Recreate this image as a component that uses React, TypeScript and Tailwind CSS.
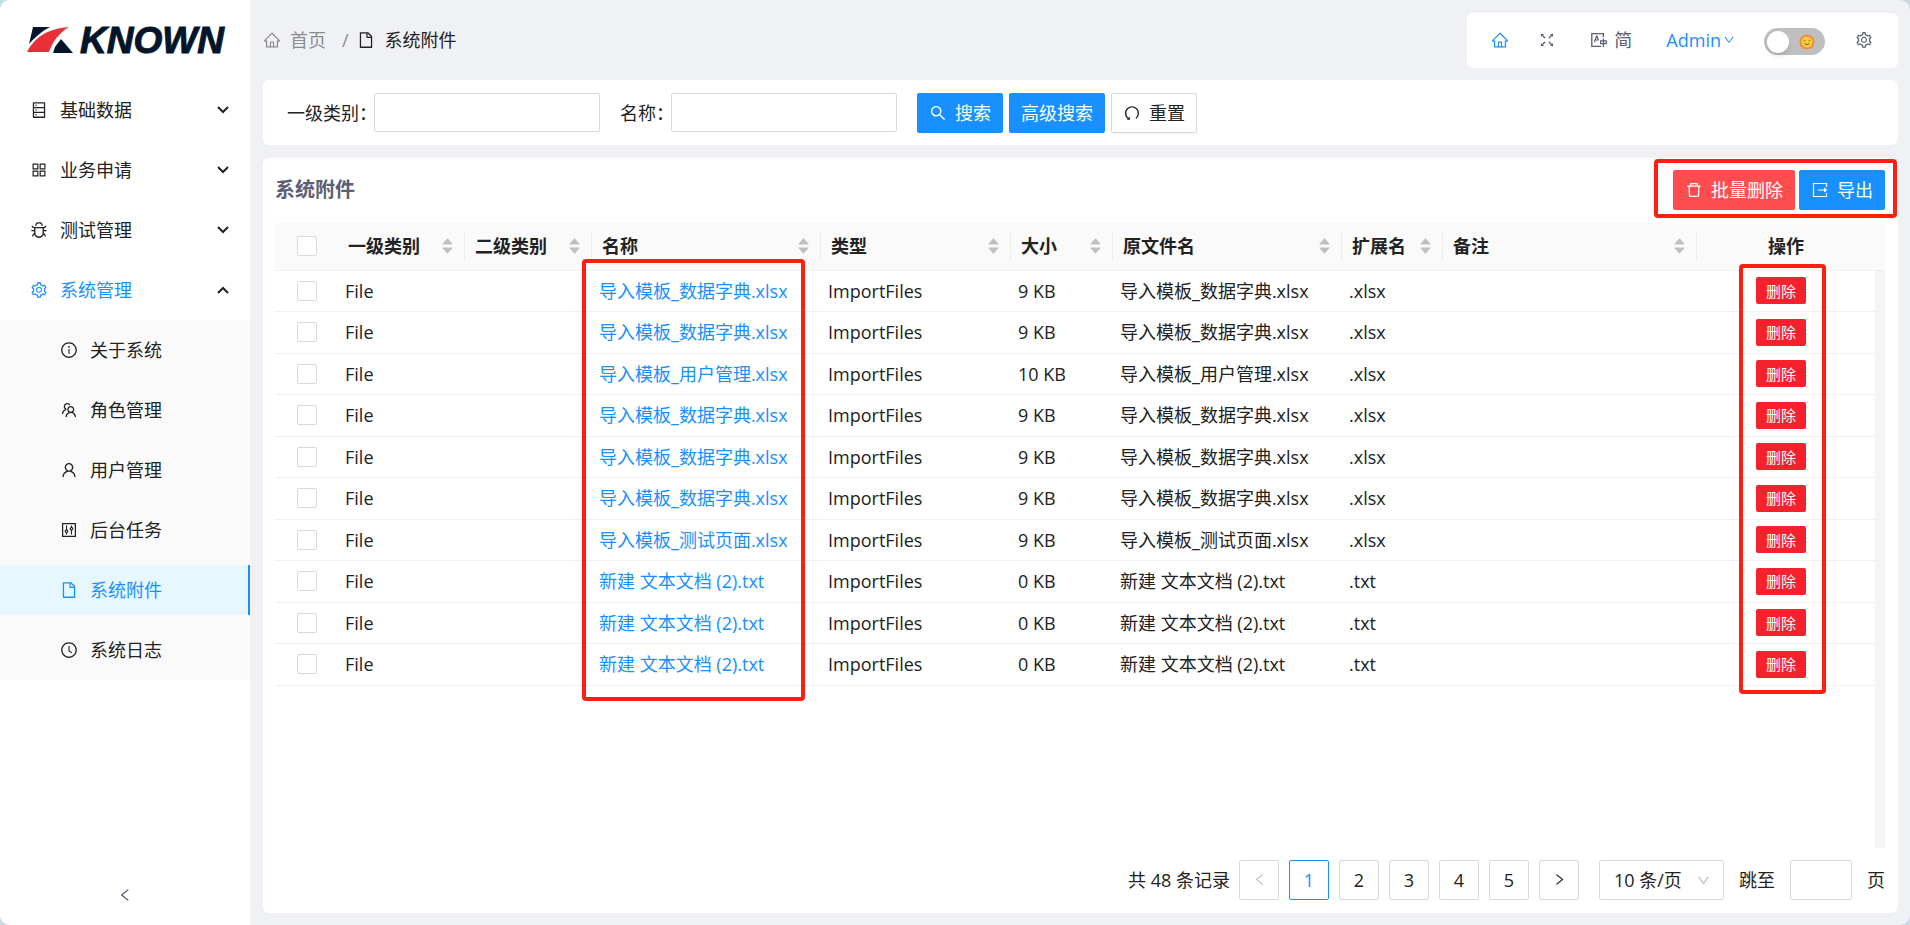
import { useState } from "react";
import type { ReactNode } from "react";
import type { IconType } from "react-icons";
import {
  AiFillCaretDown,
  AiFillCaretUp,
  AiOutlineAppstore,
  AiOutlineBug,
  AiOutlineClockCircle,
  AiOutlineControl,
  AiOutlineDatabase,
  AiOutlineDelete,
  AiOutlineDown,
  AiOutlineFile,
  AiOutlineFullscreen,
  AiOutlineHome,
  AiOutlineInfoCircle,
  AiOutlineLeft,
  AiOutlineRight,
  AiOutlineSearch,
  AiOutlineSetting,
  AiOutlineTeam,
  AiOutlineTranslation,
  AiOutlineUndo,
  AiOutlineUser,
} from "react-icons/ai";

const menus: { icon: IconType; label: string }[] = [
  { icon: AiOutlineDatabase, label: "基础数据" },
  { icon: AiOutlineAppstore, label: "业务申请" },
  { icon: AiOutlineBug, label: "测试管理" },
  { icon: AiOutlineSetting, label: "系统管理" },
];

const subMenus: { icon: IconType; label: string }[] = [
  { icon: AiOutlineInfoCircle, label: "关于系统" },
  { icon: AiOutlineTeam, label: "角色管理" },
  { icon: AiOutlineUser, label: "用户管理" },
  { icon: AiOutlineControl, label: "后台任务" },
  { icon: AiOutlineFile, label: "系统附件" },
  { icon: AiOutlineClockCircle, label: "系统日志" },
];

const columns = [
  { title: "一级类别", width: "w-[127px]" },
  { title: "二级类别", width: "w-[127px]" },
  { title: "名称", width: "w-[229px]" },
  { title: "类型", width: "w-[190px]" },
  { title: "大小", width: "w-[102px]" },
  { title: "原文件名", width: "w-[229px]" },
  { title: "扩展名", width: "w-[101px]" },
  { title: "备注", width: "" },
];

const dict = { name: "导入模板_数据字典.xlsx", size: "9 KB", ext: ".xlsx" };
const text = { name: "新建 文本文档 (2).txt", size: "0 KB", ext: ".txt" };

const files = [
  dict,
  dict,
  { name: "导入模板_用户管理.xlsx", size: "10 KB", ext: ".xlsx" },
  dict,
  dict,
  dict,
  { name: "导入模板_测试页面.xlsx", size: "9 KB", ext: ".xlsx" },
  text,
  text,
  text,
];

function Logo() {
  return (
    <div className="flex h-20 items-center pl-[27px]">
      <svg width="210" height="40" viewBox="0 0 210 40" aria-label="KNOWN">
        <path d="M6 7h17C15 11 8 17 2 24z" fill="#04152b" />
        <path d="M0 32C7 19 18 9 42 7C32 13 26 21 22 32z" fill="#e93038" />
        <path d="M34 19L46 33H26L28 27z" fill="#04152b" />
        <text
          x="53"
          y="33"
          className="font-['Liberation_Sans',sans-serif] text-[37px] font-bold italic"
          fill="#04152b"
          stroke="#04152b"
        >
          KNOWN
        </text>
      </svg>
    </div>
  );
}

function Chevron({ open }: { open: boolean }) {
  return (
    <svg width="12" height="8" viewBox="0 0 12 8" fill="none" stroke="#222" strokeWidth="2">
      <path d={open ? "M1 7l5-5 5 5" : "M1 1l5 5 5-5"} />
    </svg>
  );
}

function Sidebar() {
  return (
    <aside className="flex w-[250px] shrink-0 flex-col bg-white">
      <Logo />
      <nav>
        <div className="flex flex-col gap-[10px] py-[5px]">
          {menus.map(({ icon: Icon, label }) => {
            const open = label === "系统管理";
            return (
              <a
                key={label}
                href="#"
                className={`flex h-[50px] items-center pr-[21px] pl-[30px] ${open ? "text-[#1890ff]" : ""}`}
              >
                <Icon className="size-[18px]" />
                <span className="ml-3 flex-1">{label}</span>
                <Chevron open={open} />
              </a>
            );
          })}
        </div>
        <div className="flex flex-col gap-[10px] bg-[#fafafa] py-[5px]">
          {subMenus.map(({ icon: Icon, label }) => (
            <a
              key={label}
              href="#"
              className={`flex h-[50px] items-center border-r-2 pl-[60px] ${
                label === "系统附件" ? "border-[#1890ff] bg-[#e6f7ff] text-[#1890ff]" : "border-transparent"
              }`}
            >
              <Icon className="size-[18px]" />
              <span className="ml-3">{label}</span>
            </a>
          ))}
        </div>
      </nav>
      <button type="button" aria-label="收起" className="mt-auto flex h-[60px] items-center justify-center text-[#5b6074]">
        <AiOutlineLeft className="size-4" />
      </button>
    </aside>
  );
}

function Sun() {
  return (
    <svg width="16" height="16" viewBox="0 0 16 16" fill="none">
      <path
        d="M8 0l1.8 1.6L12 1l.9 2.1L15 4l-.4 2.2L16 8l-1.4 1.8L15 12l-2.1.9L12 15l-2.2-.5L8 16l-1.8-1.5L4 15l-.9-2.1L1 12l.4-2.2L0 8l1.4-1.8L1 4l2.1-.9L4 1l2.2.6z"
        fill="#f6873a"
      />
      <circle cx="8" cy="8" r="5.6" fill="#ffcf3f" />
      <path d="M4.5 7q1-1.4 2 0M9.5 7q1-1.4 2 0M5.5 9.5q2.5 2.5 5 0" stroke="#8a5a1c" />
    </svg>
  );
}

function ExportIcon() {
  return (
    <svg width="18" height="18" viewBox="0 0 18 18" fill="none" stroke="currentColor" className="mr-2">
      <path d="M15.5 6V2.5h-13v13h13V12" strokeWidth="1.2" />
      <path d="M7 9h7" strokeWidth="1.2" />
      <path d="M13 6.5L16.5 9 13 11.5z" fill="currentColor" stroke="none" />
    </svg>
  );
}

function TopBar() {
  const [dark, setDark] = useState(false);
  return (
    <header className="flex h-20 items-center justify-between">
      <div className="flex items-center text-[#222]">
        <a href="#" className="flex items-center text-[#8c8c8f]">
          <AiOutlineHome className="size-[18px]" />
          <span className="ml-[9px]">首页</span>
        </a>
        <span className="mr-2 ml-4 text-[#8c8c8f]">/</span>
        <AiOutlineFile className="size-[18px]" />
        <span className="ml-[10px]">系统附件</span>
      </div>
      <div className="flex h-[55px] items-center rounded-md bg-white pr-[25px] pl-6 text-[#5b6074]">
        <button type="button" aria-label="首页" className="text-[#1890ff]">
          <AiOutlineHome className="size-[18px]" />
        </button>
        <button type="button" aria-label="全屏" className="ml-[29px]">
          <AiOutlineFullscreen className="size-[18px]" />
        </button>
        <button type="button" className="ml-[34px] flex items-center">
          <AiOutlineTranslation className="size-[18px]" />
          <span className="ml-1.5">简</span>
        </button>
        <button type="button" className="ml-[34px] flex items-center text-[#1890ff]">
          Admin
          <AiOutlineDown className="ml-0.5 size-3" />
        </button>
        <label className="relative mt-[3px] ml-[29px] flex h-[27px] w-[61px] items-center rounded-full bg-[#bfbfbf]">
          <input
            type="checkbox"
            role="switch"
            aria-label="主题"
            checked={dark}
            onChange={(e) => setDark(e.target.checked)}
            className="absolute inset-0 size-full opacity-0"
          />
          <span className="ml-[3px] size-[22px] rounded-full bg-white shadow-md" />
          <span className="ml-[10px]">
            <Sun />
          </span>
        </label>
        <button type="button" aria-label="设置" className="ml-[30px]">
          <AiOutlineSetting className="size-[18px]" />
        </button>
      </div>
    </header>
  );
}

function Button({ className, children }: { className: string; children: ReactNode }) {
  return (
    <button type="button" className={`flex h-10 items-center rounded-xs border px-[11px] shadow-xs ${className}`}>
      {children}
    </button>
  );
}

function SearchForm() {
  return (
    <form className="flex h-[65px] items-center rounded-md bg-white pl-6">
      <label className="flex items-center whitespace-nowrap">
        <span className="w-[87px]">一级类别：</span>
        <input type="text" className="h-[39px] w-[226px] rounded-xs border border-[#d9d9d9] px-3" />
      </label>
      <label className="ml-5 flex items-center whitespace-nowrap">
        <span className="w-[51px]">名称：</span>
        <input type="text" className="h-[39px] w-[226px] rounded-xs border border-[#d9d9d9] px-3" />
      </label>
      <div className="ml-5 flex gap-1.5">
        <Button className="border-[#1890ff] bg-[#1890ff] text-white">
          <AiOutlineSearch className="mr-2 size-[18px]" />
          搜索
        </Button>
        <Button className="border-[#1890ff] bg-[#1890ff] text-white">高级搜索</Button>
        <Button className="border-[#d9d9d9]">
          <AiOutlineUndo className="mr-2 size-[18px]" />
          重置
        </Button>
      </div>
    </form>
  );
}

function Checkbox({ label }: { label: string }) {
  return (
    <input
      type="checkbox"
      aria-label={label}
      className="mx-auto block size-5 appearance-none rounded-xs border border-[#d9d9d9] bg-white checked:bg-[#1890ff]"
    />
  );
}

function FileTable() {
  return (
    <div className="relative flex flex-1">
      <table className="w-full table-fixed self-start">
        <thead>
          <tr className="h-[47px] border-b border-[#f0f0f0] bg-[#fafafa] text-left">
            <th className="w-[63px] p-0">
              <Checkbox label="全选" />
            </th>
            {columns.map(({ title, width }) => (
              <th key={title} className={`p-0 ${width}`}>
                <div className="flex h-7 items-center border-r border-[#ececec] pr-[9px] pl-2.5">
                  <span className="flex-1">{title}</span>
                  <span className="flex flex-col text-[#bfbfbf]">
                    <AiFillCaretUp className="-mb-[3px] size-[15px]" />
                    <AiFillCaretDown className="-mt-[3px] size-[15px]" />
                  </span>
                </div>
              </th>
            ))}
            <th className="w-[178px] p-0 text-center">操作</th>
          </tr>
        </thead>
        <tbody>
          {files.map((file, i) => (
            <tr key={i} className="border-b border-[#f0f0f0] odd:h-[41px] even:h-[42px]">
              <td className="p-0">
                <Checkbox label={`选择第${i + 1}行`} />
              </td>
              <td className="px-[7px] py-0">File</td>
              <td />
              <td className="px-[7px] py-0 whitespace-nowrap">
                <a href="#" className="text-[#1890ff]">
                  {file.name}
                </a>
              </td>
              <td className="px-[7px] py-0">ImportFiles</td>
              <td className="px-[7px] py-0">{file.size}</td>
              <td className="px-[7px] py-0 whitespace-nowrap">{file.name}</td>
              <td className="px-[7px] py-0">{file.ext}</td>
              <td />
              <td className="py-0 pr-[10px] pl-0">
                <button type="button" className="mx-auto block h-[27px] w-[50px] rounded-xs bg-[#f5222d] text-[15px] text-white">
                  删除
                </button>
              </td>
            </tr>
          ))}
        </tbody>
      </table>
      <div className="flex w-[10px] shrink-0 flex-col">
        <div className="h-12 border-b border-[#f0f0f0] bg-[#fafafa]" />
        <div className="flex-1 bg-[#f4f4f4]" />
      </div>
      <div className="pointer-events-none absolute top-9 left-[307px] h-[442px] w-[223px] rounded border-4 border-[#ff1e12]" />
      <div className="pointer-events-none absolute top-[41px] right-[59px] h-[430px] w-[87px] rounded border-4 border-[#ff1e12]" />
    </div>
  );
}

function Pagination() {
  const page = "flex size-10 items-center justify-center rounded-xs border";
  return (
    <div className="flex h-[65px] items-center justify-end pb-0.5">
      <span className="mr-[9px]">共 48 条记录</span>
      <div className="flex gap-[10px]">
        <button type="button" aria-label="上一页" disabled className={`${page} border-[#d9d9d9] text-[#bfbfbf]`}>
          <AiOutlineLeft className="size-[15px]" />
        </button>
        {[1, 2, 3, 4, 5].map((n) => (
          <button
            key={n}
            type="button"
            className={`${page} ${n === 1 ? "border-[#1890ff] font-medium text-[#1890ff]" : "border-[#d9d9d9]"}`}
          >
            {n}
          </button>
        ))}
        <button type="button" aria-label="下一页" className={`${page} border-[#d9d9d9]`}>
          <AiOutlineRight className="size-[15px]" />
        </button>
      </div>
      <div className="relative ml-5">
        <select aria-label="每页条数" className="block h-10 w-[125px] appearance-none rounded-xs border border-[#d9d9d9] bg-white pl-[14px]">
          <option>10 条/页</option>
        </select>
        <AiOutlineDown className="pointer-events-none absolute top-[13px] right-[13px] size-[15px] text-[#bfbfbf]" />
      </div>
      <label className="ml-[15px] flex items-center">
        跳至
        <input type="text" className="mx-[15px] h-10 w-[62px] rounded-xs border border-[#d9d9d9] px-2" />
        页
      </label>
    </div>
  );
}

export default function App() {
  return (
    <div className="bg-[#c3dde1] font-['Open_Sans','Noto_Sans_CJK_SC',sans-serif] text-[18px] leading-6 text-[#222]">
      <div className="flex min-h-screen overflow-hidden rounded-[10px] bg-[#f0f1f5]">
        <Sidebar />
        <main className="flex min-w-0 flex-1 flex-col pr-3 pb-3 pl-[13px]">
          <TopBar />
          <SearchForm />
          <section className="mt-[13px] flex flex-1 flex-col rounded-md bg-white pr-[13px] pl-3">
            <div className="flex h-[65px] items-center justify-between pb-px">
              <h1 className="text-[20px] font-bold text-[#5b6074]">系统附件</h1>
              <div className="relative flex gap-1">
                <Button className="border-[#ff4d4f] bg-[#ff4d4f] text-white">
                  <AiOutlineDelete className="mr-2 size-[18px]" />
                  批量删除
                </Button>
                <Button className="border-[#1890ff] bg-[#1890ff] text-white">
                  <ExportIcon />
                  导出
                </Button>
                <div className="pointer-events-none absolute -top-[11px] -right-3 -bottom-2 -left-[19px] rounded border-4 border-[#ff1e12]" />
              </div>
            </div>
            <FileTable />
            <Pagination />
          </section>
        </main>
      </div>
    </div>
  );
}
